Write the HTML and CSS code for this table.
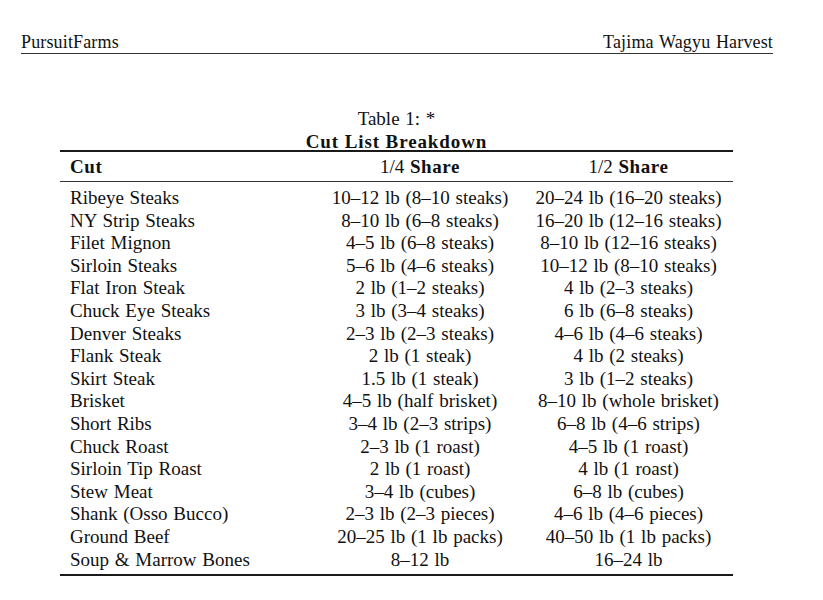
FILE: index.html
```html
<!DOCTYPE html>
<html lang="en">
<head>
<meta charset="utf-8">
<title>Cut List Breakdown</title>
<link rel="stylesheet" href="styles.css">
</head>
<body>
<div class="page">
  <header class="running-head">
    <span class="head-left">PursuitFarms</span>
    <span class="head-right">Tajima Wagyu Harvest</span>
  </header>

  <div class="float">
    <div class="caption">
      <div class="caption-label">Table 1: *</div>
      <div class="caption-title">Cut List Breakdown</div>
    </div>
    <table class="cuts">
      <colgroup>
        <col class="c1"><col class="c2"><col class="c3">
      </colgroup>
      <thead>
        <tr>
          <th class="left"><b>Cut</b></th>
          <th>1/4 <b>Share</b></th>
          <th>1/2 <b>Share</b></th>
        </tr>
      </thead>
      <tbody>
        <tr class="first"><td class="left">Ribeye Steaks</td><td>10–12 lb (8–10 steaks)</td><td>20–24 lb (16–20 steaks)</td></tr>
        <tr><td class="left">NY Strip Steaks</td><td>8–10 lb (6–8 steaks)</td><td>16–20 lb (12–16 steaks)</td></tr>
        <tr><td class="left">Filet Mignon</td><td>4–5 lb (6–8 steaks)</td><td>8–10 lb (12–16 steaks)</td></tr>
        <tr><td class="left">Sirloin Steaks</td><td>5–6 lb (4–6 steaks)</td><td>10–12 lb (8–10 steaks)</td></tr>
        <tr><td class="left">Flat Iron Steak</td><td>2 lb (1–2 steaks)</td><td>4 lb (2–3 steaks)</td></tr>
        <tr><td class="left">Chuck Eye Steaks</td><td>3 lb (3–4 steaks)</td><td>6 lb (6–8 steaks)</td></tr>
        <tr><td class="left">Denver Steaks</td><td>2–3 lb (2–3 steaks)</td><td>4–6 lb (4–6 steaks)</td></tr>
        <tr><td class="left">Flank Steak</td><td>2 lb (1 steak)</td><td>4 lb (2 steaks)</td></tr>
        <tr><td class="left">Skirt Steak</td><td>1.5 lb (1 steak)</td><td>3 lb (1–2 steaks)</td></tr>
        <tr><td class="left">Brisket</td><td>4–5 lb (half brisket)</td><td>8–10 lb (whole brisket)</td></tr>
        <tr><td class="left">Short Ribs</td><td>3–4 lb (2–3 strips)</td><td>6–8 lb (4–6 strips)</td></tr>
        <tr><td class="left">Chuck Roast</td><td>2–3 lb (1 roast)</td><td>4–5 lb (1 roast)</td></tr>
        <tr><td class="left">Sirloin Tip Roast</td><td>2 lb (1 roast)</td><td>4 lb (1 roast)</td></tr>
        <tr><td class="left">Stew Meat</td><td>3–4 lb (cubes)</td><td>6–8 lb (cubes)</td></tr>
        <tr><td class="left">Shank (Osso Bucco)</td><td>2–3 lb (2–3 pieces)</td><td>4–6 lb (4–6 pieces)</td></tr>
        <tr><td class="left">Ground Beef</td><td>20–25 lb (1 lb packs)</td><td>40–50 lb (1 lb packs)</td></tr>
        <tr class="last"><td class="left">Soup &amp; Marrow Bones</td><td>8–12 lb</td><td>16–24 lb</td></tr>
      </tbody>
    </table>
  </div>
</div>
</body>
</html>
```

FILE: styles.css
```css
html, body {
  margin: 0;
  padding: 0;
  background: #ffffff;
}

body {
  font-family: "Liberation Serif", "Times New Roman", serif;
  color: #111111;
}

.page {
  width: 823px;
  height: 600px;
  overflow: hidden;
}

.running-head {
  display: flex;
  justify-content: space-between;
  align-items: flex-end;
  margin-left: 21px;
  width: 752px;
  padding-top: 31px;
  height: 22px;
  line-height: 22px;
  font-size: 18px;
  word-spacing: 1px;
  letter-spacing: 0.15px;
  border-bottom: 1px solid #333333;
}

.float {
  margin-left: 60px;
  width: 673px;
  margin-top: 54px;
}

.caption {
  text-align: center;
}

.caption-label {
  font-size: 19px;
  line-height: 22px;
  height: 22px;
  word-spacing: 1px;
}

.caption-title {
  margin-top: 4px;
  font-size: 19px;
  font-weight: bold;
  letter-spacing: 0.9px;
  line-height: 16px;
  height: 16px;
}

.cuts {
  width: 673px;
  border-collapse: collapse;
  table-layout: fixed;
  font-size: 19px;
  word-spacing: 1px;
  border-top: 2px solid #1a1a1a;
  border-bottom: 2px solid #1a1a1a;
}

.c1 { width: 256px; }
.c2 { width: 208px; }
.c3 { width: 209px; }

.cuts th,
.cuts td {
  padding: 0;
  text-align: center;
  white-space: nowrap;
}

.cuts th {
  font-weight: normal;
  height: 29px;
  line-height: 29px;
  border-bottom: 1px solid #333333;
}

.cuts th b {
  letter-spacing: 0.6px;
}

.cuts .left {
  text-align: left;
  padding-left: 10px;
}

.cuts td {
  height: 22.6px;
  line-height: 22.6px;
}

.cuts tr.first td {
  padding-top: 5px;
}

.cuts tr.last td {
  padding-bottom: 3px;
}
```
